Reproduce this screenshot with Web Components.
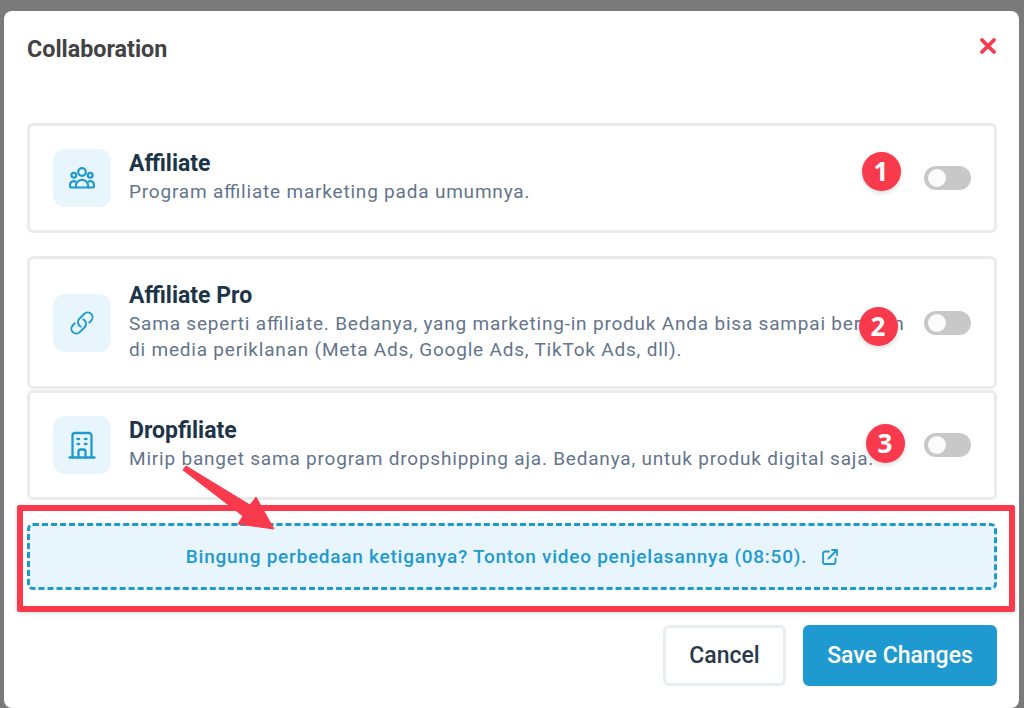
<!DOCTYPE html>
<html lang="id">
<head>
<meta charset="utf-8">
<title>Collaboration</title>
<style>
    html, body { margin: 0; padding: 0; background: #7a7a7a; }
    body { font-family: Roboto, "Liberation Sans", sans-serif; }
</style>
</head>
<body>
<modal-dialog heading="Collaboration">
    <program-card heading="Affiliate" icon="users">Program affiliate marketing pada umumnya.</program-card>
    <program-card heading="Affiliate Pro" icon="link" class="second">Sama seperti affiliate. Bedanya, yang marketing-in produk Anda bisa sampai beriklan<br>di media periklanan (Meta Ads, Google Ads, TikTok Ads, dll).</program-card>
    <program-card heading="Dropfiliate" icon="building" class="third">Mirip banget sama program dropshipping aja. Bedanya, untuk produk digital saja.</program-card>
    <video-hint>Bingung perbedaan ketiganya? Tonton video penjelasannya (08:50).</video-hint>
    <action-button slot="footer">Cancel</action-button>
    <action-button slot="footer" primary>Save Changes</action-button>
</modal-dialog>
<screen-callouts></screen-callouts>

<script>
const modalTemplate = document.createElement('template');
modalTemplate.innerHTML = `
    <style>
        :host {
            display: flex;
            flex-direction: column;
            box-sizing: border-box;
            width: 1015px;
            height: 697px;
            margin: 11px 0 0 4px;
            padding: 0 22px 0 23px;
            background: #fff;
            border-radius: 8px;
        }
        .header {
            flex: 0 0 112px;
            display: flex;
            justify-content: space-between;
            align-items: flex-start;
            padding-top: 23px;
            box-sizing: border-box;
        }
        .title {
            font-size: 23.3px;
            line-height: 30px;
            font-weight: 700;
            color: #424242;
        }
        .close {
            width: 18px;
            height: 18px;
            margin: 3px 0 0 0;
        }
        .footer {
            display: flex;
            justify-content: flex-end;
            gap: 17px;
            margin-top: 35px;
        }
    </style>
    <div class="header">
        <div class="title"></div>
        <svg class="close" viewBox="0 0 18 18" fill="none" stroke="#f93a4d" stroke-width="3.8" stroke-linecap="round">
            <path d="M3 3l12 12M15 3L3 15"/>
        </svg>
    </div>
    <slot></slot>
    <div class="footer"><slot name="footer"></slot></div>
`;

class ModalDialog extends HTMLElement {
    constructor() {
        super();
        this._shadowRoot = this.attachShadow({ mode: 'open' });
        this._shadowRoot.appendChild(modalTemplate.content.cloneNode(true));
        this._shadowRoot.querySelector('.title').textContent = this.getAttribute('heading');
    }
}

const icons = {
    users: `<svg viewBox="0 0 26 22" width="26" height="22" fill="none" stroke="#1f9ad0" stroke-width="2.2">
        <circle cx="13" cy="5" r="3.8"/>
        <circle cx="4.8" cy="8.2" r="2.4"/>
        <circle cx="21.2" cy="8.2" r="2.4"/>
        <path d="M7 20.500v-2.200a6 5.400 0 0 1 12 0v2.200z"/>
        <path d="M7 20.500H2.200a1.200 1.200 0 0 1-1.200-1.200v-1.600a3.600 3.600 0 0 1 6-2.600M19 20.500h4.800a1.200 1.200 0 0 0 1.200-1.200v-1.600a3.600 3.600 0 0 0-6-2.600"/>
    </svg>`,
    link: `<svg viewBox="0 0 24 24" width="26" height="26" fill="none" stroke="#1f9ad0" stroke-width="1.8" stroke-linecap="round" stroke-linejoin="round">
        <path d="M13.19 8.688a4.5 4.5 0 0 1 1.242 7.244l-4.5 4.5a4.5 4.5 0 0 1-6.364-6.364l1.757-1.757m13.35-.622 1.757-1.757a4.5 4.5 0 0 0-6.364-6.364l-4.5 4.5a4.5 4.5 0 0 0 1.242 7.244"/>
    </svg>`,
    building: `<svg viewBox="0 0 28 28" width="28" height="28" fill="none" stroke="#1f9ad0" stroke-width="2.300" stroke-linecap="round" stroke-linejoin="round">
        <path d="M1.500 26.500h25M4.500 26.500V4.500a2.500 2.500 0 0 1 2.500-2.500h14a2.500 2.500 0 0 1 2.500 2.500v22"/>
        <path d="M10.500 26.500v-6a2 2 0 0 1 2-2h3a2 2 0 0 1 2 2v6"/>
        <path d="M9.500 8h1.600M16.900 8h1.600M9.500 13h1.600M16.900 13h1.600"/>
    </svg>`,
};

const cardTemplate = document.createElement('template');
cardTemplate.innerHTML = `
    <style>
        :host {
            display: flex;
            align-items: center;
            box-sizing: border-box;
            min-height: 110px;
            padding: 0 23px;
            border: 3px solid #ebebeb;
            border-radius: 6px;
            margin-bottom: 23px;
        }
        :host(.second) { min-height: 133px; margin-bottom: 1px; }
        .icon {
            flex: 0 0 58px;
            height: 58px;
            display: flex;
            align-items: center;
            justify-content: center;
            background: #e8f5fc;
            border-radius: 12px;
            margin-right: 18px;
        }
        .body { flex: 1 1 auto; margin-top: -2px; }
        .name {
            font-size: 23px;
            line-height: 29px;
            font-weight: 700;
            color: #1e3448;
        }
        .description {
            margin-top: 1px;
            font-size: 19px;
            line-height: 26px;
            letter-spacing: 0.8px;
            font-feature-settings: "liga" 1;
            color: #64748b;
            white-space: nowrap;
        }
        .toggle {
            position: relative;
            flex: 0 0 47px;
            height: 24px;
            margin-left: auto;
            background: #c8c8c8;
            border-radius: 12px;
        }
        .toggle::after {
            content: '';
            position: absolute;
            left: 4px;
            top: 3px;
            width: 18px;
            height: 18px;
            background: #fbfbfb;
            border-radius: 50%;
        }
    </style>
    <div class="icon"></div>
    <div class="body">
        <div class="name"></div>
        <div class="description"><slot></slot></div>
    </div>
    <div class="toggle"></div>
`;

class ProgramCard extends HTMLElement {
    constructor() {
        super();
        this._shadowRoot = this.attachShadow({ mode: 'open' });
        this._shadowRoot.appendChild(cardTemplate.content.cloneNode(true));
        this._shadowRoot.querySelector('.name').textContent = this.getAttribute('heading');
        this._shadowRoot.querySelector('.icon').innerHTML = icons[this.getAttribute('icon')];
    }
}

const hintTemplate = document.createElement('template');
hintTemplate.innerHTML = `
    <style>
        :host {
            display: flex;
            align-items: center;
            justify-content: center;
            gap: 15px;
            box-sizing: border-box;
            height: 67px;
            background: #e8f5fc;
            border: 3px dashed #1f9ad0;
            border-radius: 6px;
            font-size: 19px;
            font-weight: 500;
            letter-spacing: 0.75px;
            color: #1f9ad0;
        }
        span { margin-top: -1px; }
        svg { flex: none; }
    </style>
    <span><slot></slot></span>
    <svg viewBox="0 0 16 16" width="16" height="16" fill="none" stroke="#1f9ad0" stroke-width="1.800" stroke-linecap="round" stroke-linejoin="round">
        <path d="M7 2.500H3a2 2 0 0 0-2 2V13a2 2 0 0 0 2 2h8.500a2 2 0 0 0 2-2V9.500"/>
        <path d="M6.500 9.500L15 1M10 1h5v5"/>
    </svg>
`;

class VideoHint extends HTMLElement {
    constructor() {
        super();
        this._shadowRoot = this.attachShadow({ mode: 'open' });
        this._shadowRoot.appendChild(hintTemplate.content.cloneNode(true));
    }
}

const buttonTemplate = document.createElement('template');
buttonTemplate.innerHTML = `
    <style>
        :host {
            display: flex;
            align-items: center;
            justify-content: center;
            box-sizing: border-box;
            height: 61px;
            width: 123px;
            border: 3px solid #e9edf2;
            border-radius: 6px;
            background: #fff;
            color: #2a3a4c;
            font-size: 23px;
            font-weight: 500;
        }
        :host([primary]) {
            width: 194px;
            border-color: #1f9ad0;
            background: #1f9ad0;
            color: #fff;
        }
    </style>
    <slot></slot>
`;

class ActionButton extends HTMLElement {
    constructor() {
        super();
        this._shadowRoot = this.attachShadow({ mode: 'open' });
        this._shadowRoot.appendChild(buttonTemplate.content.cloneNode(true));
    }
}

// the red marks drawn on top of the screenshot
const calloutsTemplate = document.createElement('template');
calloutsTemplate.innerHTML = `
    <style>
        :host {
            position: absolute;
            left: 0;
            top: 0;
            width: 1024px;
            height: 708px;
            overflow: hidden;
            pointer-events: none;
        }
        .badge {
            position: absolute;
            width: 39px;
            height: 39px;
            margin: -19.5px 0 0 -19.5px;
            display: flex;
            align-items: center;
            justify-content: center;
            background: #f93a4d;
            border-radius: 50%;
            box-shadow: 0 2px 5px rgba(0, 0, 0, 0.15);
            color: #fff;
            font: 700 26px "Open Sans", sans-serif;
        }
        .frame {
            position: absolute;
            left: 17px;
            top: 505px;
            width: 998px;
            height: 107px;
            box-sizing: border-box;
            border: 6px solid #f93a4d;
            border-radius: 2px;
            box-shadow: 0 1px 4px rgba(0, 0, 0, 0.15);
        }
        svg { position: absolute; left: 0; top: 0; }
    </style>
    <div class="frame"></div>
    <svg width="1024" height="708" viewBox="0 0 1024 708">
        <polygon points="186,466 250,505 256,497 274,529 238,524 243,516 183,470" fill="#f93a4d" stroke="#f93a4d" stroke-width="1" stroke-linejoin="round"/>
    </svg>
    <div class="badge" style="left: 881px; top: 171px">1</div>
    <div class="badge" style="left: 878px; top: 326px">2</div>
    <div class="badge" style="left: 885px; top: 443px">3</div>
`;

class ScreenCallouts extends HTMLElement {
    constructor() {
        super();
        this._shadowRoot = this.attachShadow({ mode: 'open' });
        this._shadowRoot.appendChild(calloutsTemplate.content.cloneNode(true));
    }
}

customElements.define('modal-dialog', ModalDialog);
customElements.define('program-card', ProgramCard);
customElements.define('video-hint', VideoHint);
customElements.define('action-button', ActionButton);
customElements.define('screen-callouts', ScreenCallouts);
</script>
</body>
</html>
